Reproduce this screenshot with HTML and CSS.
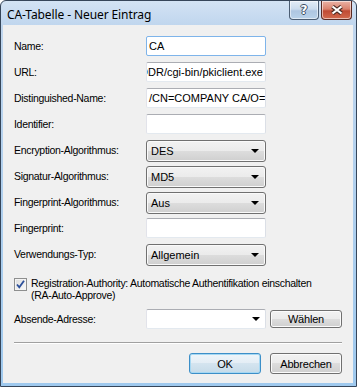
FILE: index.html
```html
<!DOCTYPE html>
<html>
<head>
<meta charset="utf-8">
<link rel="stylesheet" href="styles.css">
</head>
<body>
<div class="window">
  <div class="titlebar">
    <span class="title">CA-Tabelle - Neuer Eintrag</span>
    <div class="caption">
      <div class="cap-btn help"><span>?</span></div>
      <div class="cap-btn close">
        <svg width="14" height="10" viewBox="0 0 14 10"><path d="M2.5 1.5 L11.5 8.5 M11.5 1.5 L2.5 8.5" stroke="#4a2a22" stroke-width="4.2" fill="none"/><path d="M2.5 1.5 L11.5 8.5 M11.5 1.5 L2.5 8.5" stroke="#fff" stroke-width="2.2" fill="none"/></svg>
      </div>
    </div>
  </div>
  <div class="client">
    <div class="fields">
      <div class="row"><span class="lbl">Name:</span><div class="edit focus"><span>CA</span></div></div>
      <div class="row"><span class="lbl">URL:</span><div class="edit scrolled"><span>http://IP-ADDR/cgi-bin/pkiclient.exe</span></div></div>
      <div class="row"><span class="lbl">Distinguished-Name:</span><div class="edit"><span>/CN=COMPANY CA/O=COMPANY/C=DE</span></div></div>
      <div class="row"><span class="lbl">Identifier:</span><div class="edit"></div></div>
      <div class="row"><span class="lbl">Encryption-Algorithmus:</span><div class="combo"><span>DES</span><i class="arrow"></i></div></div>
      <div class="row"><span class="lbl">Signatur-Algorithmus:</span><div class="combo"><span>MD5</span><i class="arrow"></i></div></div>
      <div class="row"><span class="lbl">Fingerprint-Algorithmus:</span><div class="combo"><span>Aus</span><i class="arrow"></i></div></div>
      <div class="row"><span class="lbl">Fingerprint:</span><div class="edit"></div></div>
      <div class="row"><span class="lbl">Verwendungs-Typ:</span><div class="combo"><span>Allgemein</span><i class="arrow"></i></div></div>
    </div>
    <div class="check-row">
      <div class="checkbox">
        <svg width="11" height="11" viewBox="0 0 11 11"><path d="M2 5.5 L4.3 8.3 L9 1.8" stroke="#2b4f9a" stroke-width="1.8" fill="none"/></svg>
      </div>
      <div class="check-text">Registration-Authority: Automatische Authentifikation einschalten<br>(RA-Auto-Approve)</div>
    </div>
    <div class="row absende">
      <span class="lbl">Absende-Adresse:</span>
      <div class="edit combo-edit"><span></span><i class="arrow"></i></div>
      <div class="button small">Wählen</div>
    </div>
    <div class="separator"></div>
    <div class="footer">
      <div class="button default">OK</div>
      <div class="button">Abbrechen</div>
    </div>
  </div>
</div>
</body>
</html>
```
FILE: styles.css
```css
html, body {
  margin: 0;
  padding: 0;
  background: #fff;
}

.window {
  width: 357px;
  height: 387px;
  box-sizing: border-box;
  border: 1px solid #36465a;
  border-radius: 6px 6px 0 0;
  padding: 0 3px 3px 2px;
  background: linear-gradient(to bottom, #d3e3f4 0px, #c0d6ee 24px, #9fc9ee 100%);
  display: flex;
  flex-direction: column;
  font-family: "Liberation Sans", Arial, sans-serif;
  font-size: 10.5px;
  letter-spacing: -0.3px;
  color: #000;
}

.titlebar {
  height: 24px;
  display: flex;
  align-items: flex-start;
  justify-content: space-between;
}

.title {
  font-family: "Noto Sans", "Open Sans", sans-serif;
  font-size: 12px;
  letter-spacing: -0.1px;
  line-height: 16px;
  margin: 6px 0 0 4px;
  color: #000;
}

.caption {
  display: flex;
  gap: 2px;
  margin-right: 1px;
}

.cap-btn {
  height: 19px;
  box-sizing: border-box;
  border: 1px solid #4b5d73;
  border-top: none;
  border-radius: 0 0 4px 4px;
  display: flex;
  align-items: center;
  justify-content: center;
  box-shadow: inset 0 0 0 1px rgba(255,255,255,0.55);
}

.cap-btn.help {
  width: 30px;
  background: linear-gradient(to bottom, #e3edf7 0%, #cbdcee 45%, #aec6e1 55%, #b9d2ea 100%);
}

.cap-btn.help span {
  font-family: "DejaVu Sans", sans-serif;
  font-weight: bold;
  font-size: 12px;
  line-height: 12px;
  letter-spacing: 0;
  color: #fff;
  text-shadow: -1px 0 #3d4d63, 1px 0 #3d4d63, 0 -1px #3d4d63, 0 1px #3d4d63;
}

.cap-btn.close {
  width: 31px;
  border-color: #5a2a22;
  background: linear-gradient(to bottom, #eab3a6 0%, #d9826e 45%, #c04a33 55%, #d26a4e 100%);
}

.client {
  flex: 1;
  background: #f0f0f0;
  display: flex;
  flex-direction: column;
  padding: 11px 11px 0 11px;
}

.fields {
  display: flex;
  flex-direction: column;
}

.row {
  display: grid;
  grid-template-columns: 132px 120px auto;
  height: 26px;
  align-items: start;
}

.lbl {
  line-height: 20px;
  white-space: nowrap;
}

.edit {
  height: 20px;
  box-sizing: border-box;
  background: #fff;
  border: 1px solid;
  border-color: #abadb3 #dbdfe6 #e3e9ef #e2e3ea;
  border-radius: 2px;
  padding: 0 2px;
  line-height: 18px;
  font-size: 11px;
  letter-spacing: 0;
  white-space: nowrap;
  overflow: hidden;
  display: flex;
}

.edit.focus {
  border-color: #7eb4ea;
}

.edit.scrolled {
  justify-content: flex-end;
}

.edit span {
  flex: none;
}

.combo {
  height: 22px;
  box-sizing: border-box;
  border: 1px solid #707070;
  border-radius: 3px;
  background: linear-gradient(to bottom, #f2f2f2 0%, #ebebeb 50%, #dddddd 50%, #cfcfcf 100%);
  box-shadow: inset 0 0 0 1px #fafafa;
  display: flex;
  align-items: center;
  justify-content: space-between;
  padding: 0 6px 0 4px;
  font-size: 11px;
  letter-spacing: 0;
}

.arrow {
  width: 0;
  height: 0;
  border-left: 4px solid transparent;
  border-right: 4px solid transparent;
  border-top: 4px solid #000;
}

.check-row {
  display: flex;
  align-items: flex-start;
  margin-top: 7px;
  gap: 4px;
}

.checkbox {
  flex: none;
  width: 13px;
  height: 13px;
  box-sizing: border-box;
  border: 1px solid #8e8f8f;
  background: linear-gradient(to bottom right, #dcdcdc, #fafafa);
  box-shadow: inset 0 0 0 1px #f4f4f4;
  margin-top: 1px;
  display: flex;
  align-items: center;
  justify-content: center;
}

.check-text {
  line-height: 12px;
  white-space: nowrap;
}

.row.absende {
  margin-top: 8px;
  height: 20px;
  grid-template-columns: 132px 120px 72px;
  column-gap: 0;
}

.combo-edit {
  justify-content: space-between;
  align-items: center;
  padding-right: 5px;
}

.button {
  height: 21px;
  width: 72px;
  box-sizing: border-box;
  border: 1px solid #707070;
  border-radius: 3px;
  background: linear-gradient(to bottom, #f2f2f2 0%, #ebebeb 50%, #dddddd 50%, #cfcfcf 100%);
  box-shadow: inset 0 0 0 1px #fbfbfb;
  display: flex;
  align-items: center;
  justify-content: center;
  font-size: 11px;
  letter-spacing: -0.2px;
}

.button.small {
  height: 18px;
  margin-top: 1px;
  margin-left: 4px;
}

.button.default {
  border-color: #3c8fc8;
  background: linear-gradient(to bottom, #eef5fa 0%, #e3edf5 50%, #d4e4ef 50%, #c6dbe9 100%);
  box-shadow: inset 0 0 0 1px #a6d8f3;
}

.separator {
  margin-top: 13px;
  height: 1px;
  background: #a0a0a0;
  border-bottom: 1px solid #fff;
}

.footer {
  display: flex;
  justify-content: flex-end;
  gap: 9px;
  margin-top: 9px;
}
```
